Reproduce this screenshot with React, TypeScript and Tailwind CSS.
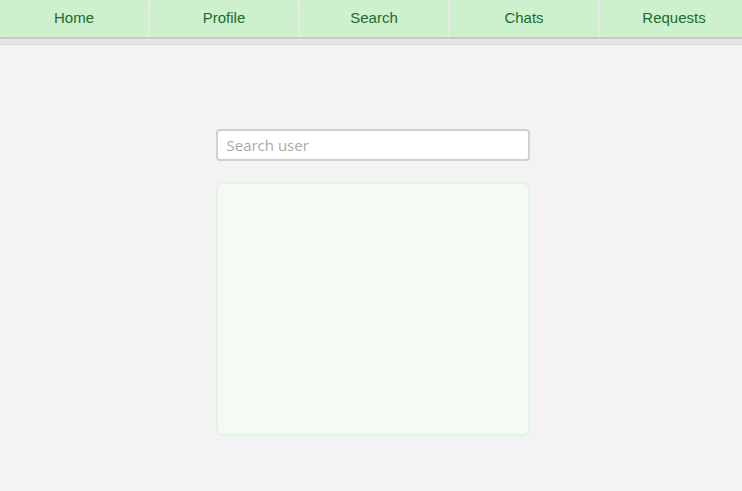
import React from 'react';

const tabs = ['Home', 'Profile', 'Search', 'Chats', 'Requests'];

const App = () => {
    return (
        <div className="min-h-screen bg-[#f3f3f3] font-['Liberation_Sans',Arial,sans-serif] overflow-hidden">
            {/* Nav */}
            <nav className="flex gap-[2px] bg-[#e4ebe4] overflow-hidden">
                {tabs.map((t) => (
                    <button
                        key={t}
                        className="shrink-0 w-[148px] h-[37px] bg-[#cdf1cc] rounded-[3px] text-[15px] text-[#1d6b2c] flex items-center justify-center"
                    >
                        {t}
                    </button>
                ))}
            </nav>
            <div className="h-[8px] border-t-2 border-b border-t-[#cacaca] border-b-[#d4d4d4] bg-[#e6e6e6]"></div>

            {/* Content */}
            <div className="flex flex-col items-center pt-[84px] pl-[3px]">
                <input
                    type="text"
                    placeholder="Search user"
                    className="w-[314px] h-[32px] px-[9px] bg-white border-2 border-[#d0d0d0] rounded-[4px] text-[15px] font-['Open_Sans',sans-serif] placeholder:text-[#a9a9a9] outline-none"
                />
                <div className="mt-[21px] w-[314px] h-[254px] bg-[#f5faf5] border-2 border-[#e2f5e0] rounded-[7px]"></div>
            </div>
        </div>
    );
};

export default App;
